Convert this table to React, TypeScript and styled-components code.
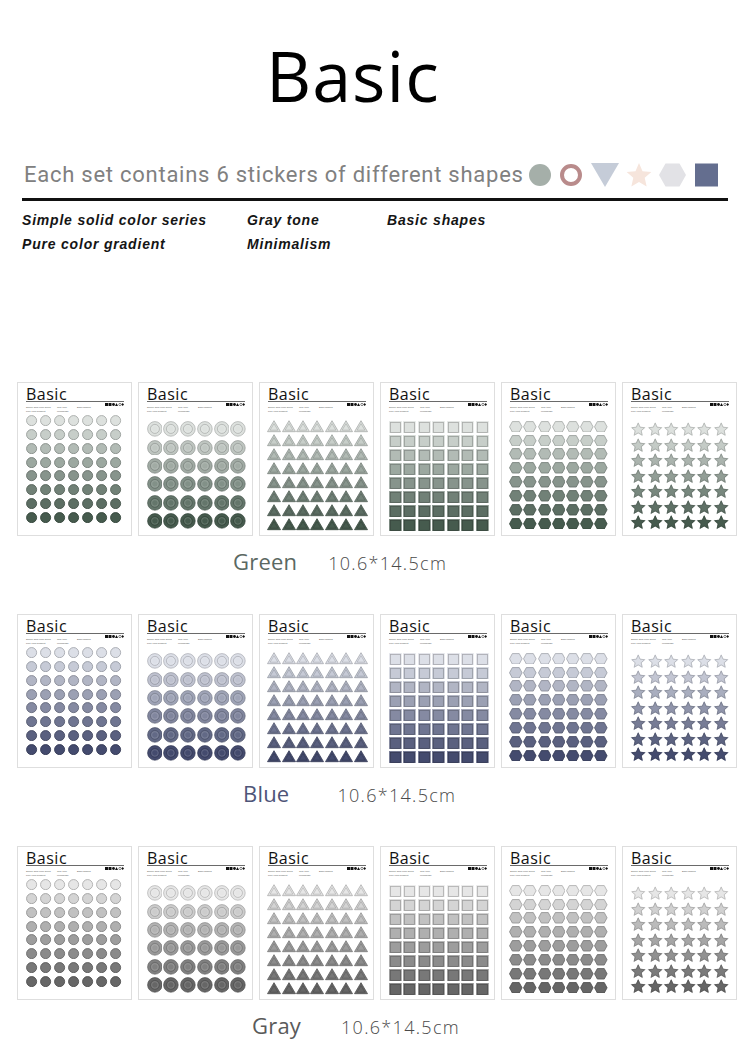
import styled, { createGlobalStyle } from "styled-components";

const GlobalStyle = createGlobalStyle`
  html, body {
    margin: 0;
    padding: 0;
    background: #fff;
  }
  body {
    font-family: "Open Sans", "Noto Sans", sans-serif;
  }
`;

type ShapeKind = "dot" | "ring" | "triangle" | "square" | "hexagon" | "star";

interface Palette {
  name: string;
  light: string;
  dark: string;
  label: string;
  indent: number;
  gap: number;
}

interface SheetSpec {
  shape: ShapeKind;
  cols: number;
  rows: number;
  colStep: number;
  rowStep: number;
  top: number;
}

const palettes: Palette[] = [
  { name: "Green", light: "#dde1de", dark: "#465b4e", label: "#5b6862", indent: 233, gap: 31 },
  { name: "Blue", light: "#dcdfe7", dark: "#444b6e", label: "#4e5578", indent: 243, gap: 48 },
  { name: "Gray", light: "#e6e6e6", dark: "#666666", label: "#5a5a5a", indent: 252, gap: 40 },
];

// grid steps and offsets read off the product photos
const sheets: SheetSpec[] = [
  { shape: "dot", cols: 7, rows: 8, colStep: 14, rowStep: 13.8, top: 1 },
  { shape: "ring", cols: 6, rows: 6, colStep: 16.8, rowStep: 18.4, top: 7 },
  { shape: "triangle", cols: 7, rows: 8, colStep: 14.4, rowStep: 14, top: 6.5 },
  { shape: "square", cols: 7, rows: 8, colStep: 14.5, rowStep: 14, top: 7 },
  { shape: "hexagon", cols: 7, rows: 8, colStep: 14.2, rowStep: 13.9, top: 6.5 },
  { shape: "star", cols: 6, rows: 7, colStep: 16.6, rowStep: 15.5, top: 8.5 },
];

const toRgb = (hex: string) => {
  const n = parseInt(hex.slice(1), 16);
  return [(n >> 16) & 255, (n >> 8) & 255, n & 255];
};

const mix = (a: string, b: string, t: number) => {
  const ca = toRgb(a);
  const cb = toRgb(b);
  const out = ca.map((v, i) => Math.round(v + (cb[i] - v) * t));
  return "#" + out.map((v) => v.toString(16).padStart(2, "0")).join("");
};

const starPoints = (cx: number, cy: number, outer: number, inner: number) => {
  const pts: string[] = [];
  for (let i = 0; i < 10; i++) {
    const r = i % 2 === 0 ? outer : inner;
    const a = (Math.PI / 5) * i - Math.PI / 2;
    pts.push(`${(cx + r * Math.cos(a)).toFixed(2)},${(cy + r * Math.sin(a)).toFixed(2)}`);
  }
  return pts.join(" ");
};

const Page = styled.div`
  width: 750px;
  padding-top: 40px;
  box-sizing: border-box;
`;

const Title = styled.h1`
  margin: 0;
  padding-left: 266px;
  font-family: "Open Sans", sans-serif;
  font-weight: 400;
  font-size: 70px;
  line-height: 70px;
  letter-spacing: 1px;
  color: #000;
`;

const Tagline = styled.div`
  display: flex;
  align-items: center;
  height: 30px;
  margin-top: 50px;
  padding-left: 24px;
  gap: 5px;
`;

const TaglineText = styled.span`
  font-family: Roboto, "Liberation Sans", sans-serif;
  font-size: 22px;
  line-height: 30px;
  letter-spacing: 0.75px;
  color: #808080;
`;

const Rule = styled.div`
  height: 3px;
  margin: 8px 22px 0;
  background: #111;
`;

const Tags = styled.div`
  display: grid;
  grid-template-columns: 225px 140px auto;
  margin-top: 7px;
  padding-left: 22px;
`;

const Tag = styled.span`
  font-family: "Liberation Sans", Arial, sans-serif;
  font-style: italic;
  font-weight: 700;
  font-size: 14px;
  line-height: 24px;
  letter-spacing: 0.8px;
  color: #151515;
`;

const Collection = styled.section`
  margin-top: 126px;
`;

const CardRow = styled.div`
  display: flex;
  gap: 6px;
  padding-left: 17px;
`;

const Card = styled.div`
  width: 115px;
  height: 154px;
  box-sizing: border-box;
  border: 1px solid #dedede;
  background: #fff;
  padding: 4px 7px 0 8px;
  display: flex;
  flex-direction: column;
`;

const CardTitle = styled.div`
  font-family: "Open Sans", sans-serif;
  font-size: 16px;
  line-height: 14px;
  letter-spacing: 0.5px;
  color: #111;
`;

const CardRule = styled.div`
  height: 1px;
  background: #6a6a6a;
`;

const Meta = styled.div`
  display: grid;
  grid-template-columns: 31px 20px 1fr auto;
  margin-top: 3px;
  font-family: "Liberation Sans", sans-serif;
  font-size: 2.3px;
  line-height: 4px;
  color: #555;
  white-space: nowrap;
`;

const MetaIcons = styled.svg`
  margin-top: -2px;
`;

const Grid = styled.div<{ $cols: number; $rows: number; $colStep: number; $rowStep: number; $top: number }>`
  display: grid;
  grid-template-columns: repeat(${(p) => p.$cols}, ${(p) => p.$colStep}px);
  grid-template-rows: repeat(${(p) => p.$rows}, ${(p) => p.$rowStep}px);
  place-items: center;
  margin-top: ${(p) => p.$top}px;
  margin-left: -1px;
`;

const Caption = styled.div<{ $indent: number }>`
  display: flex;
  align-items: baseline;
  height: 78px;
  box-sizing: border-box;
  padding-top: 14px;
  padding-left: ${(p) => p.$indent}px;
`;

const ColorName = styled.span<{ $color: string }>`
  font-family: "Open Sans", sans-serif;
  font-size: 22px;
  line-height: 23px;
  letter-spacing: 0.2px;
  color: ${(p) => p.$color};
`;

const SizeText = styled.span<{ $gap: number }>`
  margin-left: ${(p) => p.$gap}px;
  font-family: "Open Sans", sans-serif;
  font-weight: 300;
  font-size: 18px;
  letter-spacing: 1.3px;
  color: #4a4a4a;
`;

const Sticker = ({ shape, fill }: { shape: ShapeKind; fill: string }) => {
  const line = mix(fill, "#000000", 0.24);
  const halo = mix(fill, "#ffffff", 0.3);
  switch (shape) {
    case "dot":
      return (
        <svg width="11.2" height="11.2" viewBox="0 0 10 10">
          <circle cx="5" cy="5" r="4.5" fill={fill} stroke={line} strokeWidth="0.8" />
        </svg>
      );
    case "ring":
      return (
        <svg width="15.8" height="15.8" viewBox="0 0 16 16">
          <circle cx="8" cy="8" r="7.4" fill={fill} stroke={line} strokeWidth="0.7" />
          <circle cx="8" cy="8" r="4.6" fill="none" stroke={line} strokeWidth="0.7" />
          <circle cx="8" cy="8" r="3.3" fill="none" stroke={halo} strokeWidth="0.5" />
        </svg>
      );
    case "triangle":
      return (
        <svg width="14" height="12.4" viewBox="0 0 14 12">
          <polygon points="7,0.5 13.5,11.5 0.5,11.5" fill={fill} stroke={line} strokeWidth="0.8" />
          <polygon points="7,3.4 10.9,10 3.1,10" fill="none" stroke={line} strokeWidth="0.6" />
        </svg>
      );
    case "square":
      return (
        <svg width="12.8" height="12.8" viewBox="0 0 12 12">
          <rect x="0" y="0" width="12" height="12" fill={halo} />
          <rect x="1.3" y="1.3" width="9.4" height="9.4" fill={fill} stroke={line} strokeWidth="0.8" />
        </svg>
      );
    case "hexagon":
      return (
        <svg width="13.6" height="11.6" viewBox="0 0 13 11">
          <polygon
            points="3.2,0.5 9.8,0.5 12.5,5.5 9.8,10.5 3.2,10.5 0.5,5.5"
            fill={fill}
            stroke={line}
            strokeWidth="0.8"
          />
        </svg>
      );
    case "star":
      return (
        <svg width="16.4" height="16.4" viewBox="0 0 24 24">
          <polygon points={starPoints(12, 12.8, 11.8, 5.6)} fill={halo} />
          <polygon points={starPoints(12, 12.8, 9.8, 4.6)} fill={fill} stroke={line} strokeWidth="1" />
        </svg>
      );
  }
};

const StickerSheet = ({ spec, palette }: { spec: SheetSpec; palette: Palette }) => {
  const cells = [];
  for (let r = 0; r < spec.rows; r++) {
    const fill = mix(palette.light, palette.dark, r / (spec.rows - 1));
    for (let c = 0; c < spec.cols; c++) {
      cells.push(<Sticker key={`${r}-${c}`} shape={spec.shape} fill={fill} />);
    }
  }
  return (
    <Card>
      <CardTitle>Basic</CardTitle>
      <CardRule />
      <Meta>
        <span>
          Simple solid color series
          <br />
          Pure color gradient
        </span>
        <span>
          Gray tone
          <br />
          Minimalism
        </span>
        <span>Basic shapes</span>
        <MetaIcons width="19" height="3" viewBox="0 0 19 3">
          <rect x="0" y="0" width="3" height="3" fill="#111" />
          <rect x="3.5" y="0" width="3" height="3" fill="#111" />
          <circle cx="8.5" cy="1.5" r="1.4" fill="#111" />
          <polygon points="11.5,0 13,3 10,3" fill="#111" />
          <circle cx="15" cy="1.5" r="1.2" fill="none" stroke="#111" strokeWidth="0.5" />
          <polygon points="17.7,0 19,1.5 17.7,3 16.4,1.5" fill="#111" />
        </MetaIcons>
      </Meta>
      <Grid
        $cols={spec.cols}
        $rows={spec.rows}
        $colStep={spec.colStep}
        $rowStep={spec.rowStep}
        $top={spec.top}
      >
        {cells}
      </Grid>
    </Card>
  );
};

const ShapeLegend = () => (
  <svg width="200" height="28" viewBox="0 0 200 28">
    <circle cx="11" cy="14" r="11" fill="#a5afa9" />
    <circle cx="42" cy="14" r="9" fill="none" stroke="#b98b8b" strokeWidth="4" />
    <polygon points="62,2 90,2 76,26" fill="#c5ccd8" />
    <polygon points={starPoints(110, 15, 13, 6)} fill="#f6e5dc" />
    <polygon points="130,14 136.5,2.5 150.5,2.5 157,14 150.5,25.5 136.5,25.5" fill="#e2e2e6" />
    <rect x="166" y="2.5" width="23" height="23" fill="#646e8f" />
  </svg>
);

const App = () => {
  return (
    <Page>
      <GlobalStyle />
      <Title>Basic</Title>
      <Tagline>
        <TaglineText>Each set contains 6 stickers of different shapes</TaglineText>
        <ShapeLegend />
      </Tagline>
      <Rule />
      <Tags>
        <Tag>Simple solid color series</Tag>
        <Tag>Gray tone</Tag>
        <Tag>Basic shapes</Tag>
        <Tag>Pure color gradient</Tag>
        <Tag>Minimalism</Tag>
      </Tags>
      <Collection>
        {palettes.map((palette) => (
          <div key={palette.name}>
            <CardRow>
              {sheets.map((spec) => (
                <StickerSheet key={spec.shape} spec={spec} palette={palette} />
              ))}
            </CardRow>
            <Caption $indent={palette.indent}>
              <ColorName $color={palette.label}>{palette.name}</ColorName>
              <SizeText $gap={palette.gap}>10.6*14.5cm</SizeText>
            </Caption>
          </div>
        ))}
      </Collection>
    </Page>
  );
};

export default App;
